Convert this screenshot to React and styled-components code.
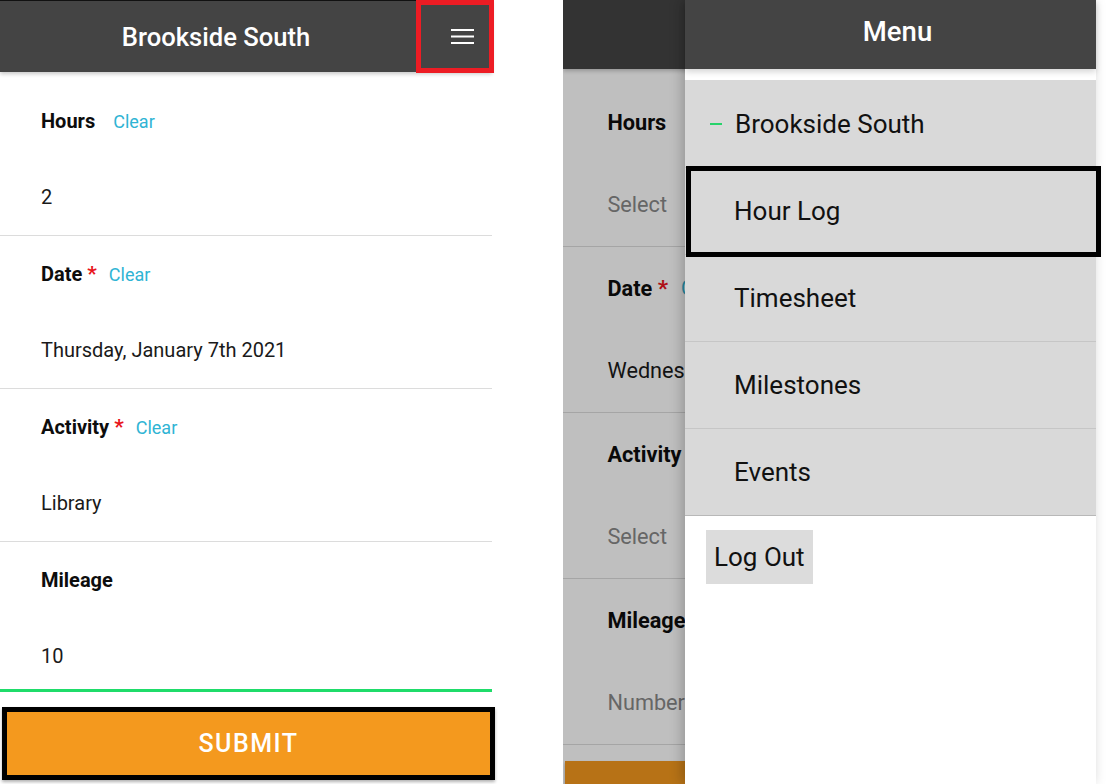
import styled, { createGlobalStyle, css } from "styled-components";

const GlobalStyle = createGlobalStyle`
  html, body {
    margin: 0;
    padding: 0;
    background: #fff;
  }
  body {
    font-family: Roboto, "Noto Sans", Arial, sans-serif;
  }
`;

// scale helper: the right screenshot is the same screen at a slightly larger size
const sc = (n) => (p) => `${(n * (p.$s || 1)).toFixed(2)}px`;

const Page = styled.div`
  display: flex;
  align-items: flex-start;
  gap: 68px;
  width: 1107px;
  height: 784px;
  overflow: hidden;
`;

const Phone = styled.div`
  width: 495px;
  display: flex;
  flex-direction: column;
`;

const AppBar = styled.header`
  width: ${sc(492)};
  height: ${(p) => p.$h}px;
  box-sizing: border-box;
  background: #444;
  display: flex;
  align-items: flex-start;
  position: relative;
  z-index: 1;
  box-shadow: 0 2px 4px rgba(0, 0, 0, 0.22);
  ${(p) =>
    p.$edge &&
    css`
      border-top: 1px solid #111;
    `}
`;

const Title = styled.h1`
  flex: 1;
  margin: 0;
  padding-left: 16px;
  align-self: stretch;
  display: flex;
  align-items: center;
  justify-content: center;
  color: #fff;
  font-size: 25.6px;
  font-weight: 500;
`;

const MenuButton = styled.button`
  width: 78px;
  height: 73px;
  margin-top: -1px;
  margin-right: -2px;
  box-sizing: border-box;
  border: 5px solid #ed1c24;
  background: transparent;
  padding: 0 0 0 14px;
  display: flex;
  align-items: center;
  justify-content: center;
  cursor: pointer;
`;

const Form = styled.div`
  padding-top: ${sc(11)};
  width: ${sc(492)};
`;

const Field = styled.div`
  box-sizing: border-box;
  height: ${(p) => (p.$focused ? sc(150)(p) : sc(153)(p))};
  padding: ${sc(26)} 0 0 ${sc(41)};
  border-bottom: ${(p) => (p.$focused ? "3px solid #1fdc6a" : "1px solid #dcdcdc")};
`;

const LabelRow = styled.div`
  display: flex;
  align-items: center;
  height: ${sc(24)};
  white-space: nowrap;
`;

const Label = styled.span`
  font-size: ${sc(20)};
  font-weight: 700;
  color: #0d0d0d;
`;

const Required = styled.span`
  margin-left: ${sc(5)};
  font-size: ${sc(21)};
  font-weight: 700;
  color: #e8141c;
`;

const ClearLink = styled.span`
  margin-left: ${(p) => (p.$afterStar ? sc(12)(p) : sc(18)(p))};
  font-size: ${sc(18)};
  color: #2fb4d4;
`;

const Value = styled.div`
  margin-top: ${sc(52)};
  height: ${sc(24)};
  line-height: ${sc(24)};
  font-size: ${sc(20)};
  color: ${(p) => (p.$placeholder ? "#888" : "#1a1a1a")};
  white-space: nowrap;
`;

const SubmitButton = styled.button`
  display: block;
  margin: ${sc(15)} 0 0 ${sc(2)};
  width: ${sc(493)};
  height: ${sc(73)};
  box-sizing: border-box;
  background: #f4991e;
  border: ${(p) => (p.$outlined ? "5px solid #000" : "none")};
  box-shadow: 0 2px 3px rgba(0, 0, 0, 0.3);
  color: #fff;
  font-family: Roboto, sans-serif;
  font-size: ${sc(25)};
  font-weight: 500;
  letter-spacing: ${sc(1.5)};
  padding: 0;
`;

const MenuPhone = styled.div`
  display: flex;
  height: 784px;
`;

const Backdrop = styled.div`
  width: 122px;
  flex: none;
  height: 100%;
  overflow: hidden;
  position: relative;
  &::after {
    content: "";
    position: absolute;
    inset: 0;
    z-index: 5;
    background: rgba(0, 0, 0, 0.25);
  }
`;

const Drawer = styled.nav`
  width: 411px;
  flex: none;
  height: 100%;
  display: flex;
  flex-direction: column;
  background: #fff;
  position: relative;
  z-index: 2;
  box-shadow: -3px 0 12px rgba(0, 0, 0, 0.22);
`;

const DrawerHeader = styled.div`
  height: 69px;
  box-sizing: border-box;
  padding: 0 0 7px 14px;
  background: #444;
  color: #fff;
  font-size: 27.5px;
  font-weight: 500;
  display: flex;
  align-items: center;
  justify-content: center;
  position: relative;
  z-index: 1;
  box-shadow: 0 3px 6px rgba(0, 0, 0, 0.16);
`;

const DrawerGap = styled.div`
  height: 11px;
`;

const NavList = styled.ul`
  margin: 0;
  padding: 0;
  list-style: none;
  background: #d9d9d9;
`;

const NavItem = styled.li`
  position: relative;
  box-sizing: border-box;
  height: ${(p) => (p.$first ? 88 : 87)}px;
  display: flex;
  align-items: center;
  padding-left: ${(p) => (p.$first ? 25 : 49)}px;
  border-bottom: 1px solid ${(p) => (p.$last ? "#b8b8b8" : "#c6c6c6")};
  font-size: 26px;
  color: #111;
  ${(p) =>
    p.$active &&
    css`
      &::after {
        content: "";
        position: absolute;
        left: 1px;
        right: -5px;
        top: -2px;
        bottom: -3px;
        border: 5px solid #000;
      }
    `}
`;

const Dash = styled.span`
  width: 12px;
  height: 2px;
  margin-right: 13px;
  background: #27d36b;
`;

const LogOutButton = styled.button`
  align-self: flex-start;
  margin: 14px 0 0 21px;
  height: 54px;
  padding: 0 8px;
  border: none;
  background: #dcdcdc;
  color: #111;
  font-family: Roboto, sans-serif;
  font-size: 26px;
`;

const Hamburger = () => (
  <svg width="23" height="15" viewBox="0 0 23 15">
    <rect x="0" y="0" width="23" height="2" fill="#fff" />
    <rect x="0" y="6.5" width="23" height="2" fill="#fff" />
    <rect x="0" y="13" width="23" height="2" fill="#fff" />
  </svg>
);

const fieldsLeft = [
  { label: "Hours", value: "2" },
  { label: "Date", required: true, value: "Thursday, January 7th 2021" },
  { label: "Activity", required: true, value: "Library" },
  { label: "Mileage", value: "10", noClear: true },
];

const fieldsBack = [
  { label: "Hours", value: "Select", placeholder: true },
  { label: "Date", required: true, value: "Wednesday, January 6th 2021" },
  { label: "Activity", required: true, value: "Select", placeholder: true },
  { label: "Mileage", value: "Number", placeholder: true, noClear: true },
];

const menuItems = ["Hour Log", "Timesheet", "Milestones", "Events"];

function HourForm({ fields, s = 1, focusLast }) {
  return (
    <Form $s={s}>
      {fields.map((f, i) => (
        <Field key={f.label} $s={s} $focused={focusLast && i === fields.length - 1}>
          <LabelRow $s={s}>
            <Label $s={s}>{f.label}</Label>
            {f.required && <Required $s={s}>*</Required>}
            {!f.noClear && (
              <ClearLink $s={s} $afterStar={f.required}>
                Clear
              </ClearLink>
            )}
          </LabelRow>
          <Value $s={s} $placeholder={f.placeholder}>
            {f.value}
          </Value>
        </Field>
      ))}
    </Form>
  );
}

export default function App() {
  return (
    <>
      <GlobalStyle />
      <Page>
        <Phone>
          <AppBar $h={72} $edge>
            <Title>Brookside South</Title>
            <MenuButton aria-label="Menu">
              <Hamburger />
            </MenuButton>
          </AppBar>
          <HourForm fields={fieldsLeft} focusLast />
          <SubmitButton $outlined>SUBMIT</SubmitButton>
        </Phone>

        <MenuPhone>
          <Backdrop>
            <AppBar $h={69} $s={1.085} />
            <HourForm fields={fieldsBack} s={1.085} />
            <SubmitButton $s={1.085}>SUBMIT</SubmitButton>
          </Backdrop>
          <Drawer>
            <DrawerHeader>Menu</DrawerHeader>
            <DrawerGap />
            <NavList>
              <NavItem $first>
                <Dash />
                Brookside South
              </NavItem>
              {menuItems.map((item, i) => (
                <NavItem key={item} $active={i === 0} $last={i === menuItems.length - 1}>
                  {item}
                </NavItem>
              ))}
            </NavList>
            <LogOutButton>Log Out</LogOutButton>
          </Drawer>
        </MenuPhone>
      </Page>
    </>
  );
}
